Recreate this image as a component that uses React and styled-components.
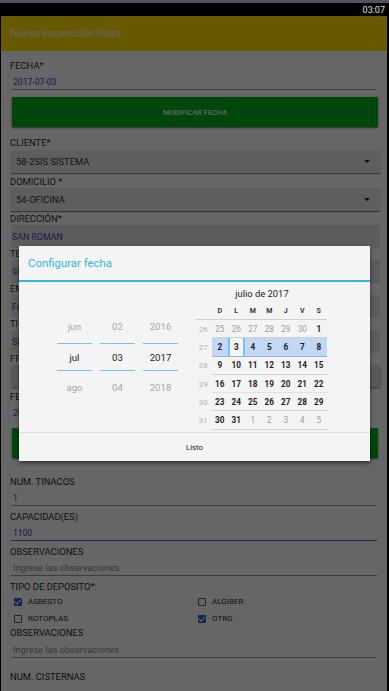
import React from "react";
import styled, { createGlobalStyle } from "styled-components";

const GlobalStyle = createGlobalStyle`
  html, body {
    margin: 0;
    padding: 0;
    background: #000;
  }
  body {
    font-family: Roboto, "Noto Sans", Arial, sans-serif;
    -webkit-font-smoothing: antialiased;
  }
`;

const weekDays = ["D", "L", "M", "M", "J", "V", "S"];

const weeks = [
  { num: 26, days: [[25, false], [26, false], [27, false], [28, false], [29, false], [30, false], [1, true]] },
  { num: 27, days: [[2, true], [3, true], [4, true], [5, true], [6, true], [7, true], [8, true]], current: true },
  { num: 28, days: [[9, true], [10, true], [11, true], [12, true], [13, true], [14, true], [15, true]] },
  { num: 29, days: [[16, true], [17, true], [18, true], [19, true], [20, true], [21, true], [22, true]], light: true },
  { num: 30, days: [[23, true], [24, true], [25, true], [26, true], [27, true], [28, true], [29, true]] },
  { num: 31, days: [[30, true], [31, true], [1, false], [2, false], [3, false], [4, false], [5, false]] },
];

const App = () => {
  return (
    <>
      <GlobalStyle />
      <Screen>
        <TopStrip />
        <StatusBar>03:07</StatusBar>
        <Window>
          <AppBar>Nueva Inspección Plata</AppBar>
          <Form>
            <Label top={9}>FECHA*</Label>
            <LineValue top={3}>2017-07-03</LineValue>
            <GreenButton top={7}>MODIFICAR FECHA</GreenButton>

            <Label top={10}>CLIENTE*</Label>
            <Select top={1}>
              <span>58-2SIS SISTEMA</span>
              <Caret />
            </Select>
            <Label top={3}>DOMICILIO *</Label>
            <Select>
              <span>54-OFICINA</span>
              <Caret />
            </Select>

            <Label top={2}>DIRECCIÓN*</Label>
            <FieldBox>SAN ROMAN</FieldBox>
            <Label>TEL</Label>
            <FieldBox>98</FieldBox>
            <Label>EM</Label>
            <FieldBox>Fra</FieldBox>
            <Label>TI</Label>
            <FieldBox>SE</FieldBox>
            <Label>FR</Label>
            <GreyButton />
            <Label top={4}>FE</Label>
            <PlainValue>20</PlainValue>
            <GreenButton top={7} />

            <Label top={18}>NUM. TINACOS</Label>
            <LineValue top={3}>1</LineValue>
            <Label top={5}>CAPACIDAD(ES)</Label>
            <LineValue top={3} focused>1100</LineValue>
            <Label top={5}>OBSERVACIONES</Label>
            <LineValue top={3} hint>Ingrese las observaciones</LineValue>
            <Label top={5}>TIPO DE DEPOSITO*:</Label>
            <CheckGrid>
              <CheckItem>
                <Box checked>
                  <CheckMark />
                </Box>
                ASBESTO
              </CheckItem>
              <CheckItem>
                <Box />
                ALGIBER
              </CheckItem>
              <CheckItem>
                <Box />
                ROTOPLAS
              </CheckItem>
              <CheckItem>
                <Box checked>
                  <CheckMark />
                </Box>
                OTRO
              </CheckItem>
            </CheckGrid>
            <Label>OBSERVACIONES</Label>
            <LineValue top={4} hint>Ingrese las observaciones</LineValue>
            <Label top={13}>NUM. CISTERNAS</Label>
          </Form>
          <Scrim />
          <Dialog>
            <DialogTitle>Configurar fecha</DialogTitle>
            <DialogBody>
              <Spinners>
                <SpinnerColumn>
                  <SpinItem>jun</SpinItem>
                  <SpinItem selected>jul</SpinItem>
                  <SpinItem>ago</SpinItem>
                </SpinnerColumn>
                <SpinnerColumn>
                  <SpinItem>02</SpinItem>
                  <SpinItem selected>03</SpinItem>
                  <SpinItem>04</SpinItem>
                </SpinnerColumn>
                <SpinnerColumn>
                  <SpinItem>2016</SpinItem>
                  <SpinItem selected>2017</SpinItem>
                  <SpinItem>2018</SpinItem>
                </SpinnerColumn>
              </Spinners>
              <Calendar>
                <MonthTitle>julio de 2017</MonthTitle>
                <HeaderRow>
                  <Cell />
                  {weekDays.map((d, i) => (
                    <DayName key={i}>{d}</DayName>
                  ))}
                </HeaderRow>
                {weeks.map((w) => (
                  <WeekRow key={w.num}>
                    <WeekNum>{w.num}</WeekNum>
                    <WeekDays current={w.current} light={w.light}>
                      {w.days.map(([n, inMonth], i) => (
                        <Day
                          key={i}
                          inMonth={inMonth}
                          selected={w.current && n === 3}
                        >
                          {n}
                        </Day>
                      ))}
                    </WeekDays>
                  </WeekRow>
                ))}
              </Calendar>
            </DialogBody>
            <DialogFooter>Listo</DialogFooter>
          </Dialog>
        </Window>
      </Screen>
    </>
  );
};

// ================= Styled Components =================
const Screen = styled.div`
  width: 389px;
  height: 691px;
  overflow: hidden;
  display: flex;
  flex-direction: column;
  background: #000;
`;

const TopStrip = styled.div`
  height: 3px;
  background: #54505e;
`;

const StatusBar = styled.div`
  height: 13px;
  display: flex;
  align-items: center;
  justify-content: flex-end;
  padding-right: 4px;
  color: #e0e0e0;
  font-size: 9px;
  background: #000;
`;

const Window = styled.div`
  position: relative;
  flex: 1;
  margin-left: 1px;
  margin-right: 2px;
  background: #ffffff;
  display: flex;
  flex-direction: column;
`;

const AppBar = styled.div`
  height: 35px;
  flex-shrink: 0;
  display: flex;
  align-items: center;
  padding-left: 9px;
  background: #ffdf00;
  color: #ffffff;
  font-size: 10.6px;
`;

const Form = styled.div`
  display: flex;
  flex-direction: column;
  padding: 0 9px 0 9px;
`;

const Label = styled.div`
  margin-top: ${(p) => p.top || 0}px;
  height: 12px;
  line-height: 12px;
  font-size: 9.4px;
  color: #2b2b2b;
  white-space: nowrap;
`;

const LineValue = styled.div`
  margin-top: ${(p) => p.top || 2}px;
  margin-left: 1px;
  margin-right: 1px;
  height: 14px;
  line-height: 14px;
  padding-left: 2px;
  font-size: ${(p) => (p.hint ? "9.2px" : "8.6px")};
  color: ${(p) => (p.hint ? "#8a8a8a" : "#4742c0")};
  border-bottom: ${(p) => (p.focused ? "1.5px solid #3d73cc" : "1px solid #9a9a9a")};
`;

const PlainValue = styled.div`
  margin-top: 2px;
  height: 16px;
  line-height: 16px;
  padding-left: 3px;
  font-size: 8.6px;
  color: #4742c0;
`;

const GreenButton = styled.div`
  margin-top: ${(p) => p.top || 0}px;
  margin-left: 2px;
  height: 30px;
  flex-shrink: 0;
  display: flex;
  align-items: center;
  justify-content: center;
  background: #00b21f;
  color: #f4f4f4;
  font-size: 7.4px;
  font-weight: 500;
  border-radius: 1px;
  box-shadow: 0 1px 2px rgba(0, 0, 0, 0.6);
`;

const Select = styled.div`
  margin-top: ${(p) => p.top || 0}px;
  margin-left: 1px;
  margin-right: -2px;
  height: 23px;
  flex-shrink: 0;
  display: flex;
  align-items: center;
  justify-content: space-between;
  padding: 0 10px 0 5px;
  background: #ececec;
  color: #333;
  font-size: 9.4px;
  box-shadow: 0 1px 1px rgba(0, 0, 0, 0.45);
`;

const Caret = styled.span`
  width: 0;
  height: 0;
  border-left: 3px solid transparent;
  border-right: 3px solid transparent;
  border-top: 3px solid #222;
`;

const FieldBox = styled.div`
  margin-left: 1px;
  margin-right: -2px;
  height: 23px;
  flex-shrink: 0;
  display: flex;
  align-items: center;
  padding-left: 1px;
  background: #e6e6e6;
  color: #4742c0;
  font-size: 8.8px;
`;

const GreyButton = styled.div`
  margin-left: 2px;
  margin-right: -2px;
  height: 22px;
  flex-shrink: 0;
  background: #e2e2e2;
  box-shadow: 0 1px 2px rgba(0, 0, 0, 0.5);
`;

const CheckGrid = styled.div`
  display: grid;
  grid-template-columns: 184px 1fr;
  grid-auto-rows: 17px;
  padding-left: 4px;
`;

const CheckItem = styled.div`
  display: flex;
  align-items: center;
  gap: 6px;
  font-size: 8px;
  color: #2b2b2b;
`;

const Box = styled.div`
  width: 8px;
  height: 8px;
  border-radius: 1px;
  box-sizing: border-box;
  display: flex;
  align-items: center;
  justify-content: center;
  background: ${(p) => (p.checked ? "#3062d4" : "transparent")};
  border: ${(p) => (p.checked ? "none" : "1.2px solid #555")};
`;

const CheckMark = styled.span`
  width: 2.5px;
  height: 4.5px;
  margin-top: -1px;
  border-right: 1px solid #fff;
  border-bottom: 1px solid #fff;
  transform: rotate(40deg);
`;

const Scrim = styled.div`
  position: absolute;
  inset: 0;
  background: rgba(0, 0, 0, 0.6);
`;

const Dialog = styled.div`
  position: absolute;
  left: 18px;
  top: 230px;
  width: 351px;
  height: 215px;
  display: flex;
  flex-direction: column;
  background: #f4f4f4;
  box-shadow: 0 2px 4px rgba(0, 0, 0, 0.55);
`;

const DialogTitle = styled.div`
  height: 36px;
  flex-shrink: 0;
  display: flex;
  align-items: center;
  padding: 0 0 0 9px;
  box-sizing: border-box;
  color: #33b5e5;
  font-size: 11.4px;
  border-bottom: 2px solid #33b5e5;
`;

const DialogBody = styled.div`
  flex: 1;
  display: flex;
  align-items: stretch;
  border-bottom: 1px solid #dedede;
`;

const Spinners = styled.div`
  width: 176px;
  display: flex;
  align-items: center;
  gap: 8px;
  padding-left: 38px;
  box-sizing: border-box;
`;

const SpinnerColumn = styled.div`
  width: 35px;
  display: flex;
  flex-direction: column;
`;

const SpinItem = styled.div`
  height: ${(p) => (p.selected ? "28px" : "33px")};
  display: flex;
  align-items: center;
  justify-content: center;
  box-sizing: border-box;
  font-size: 9.6px;
  color: ${(p) => (p.selected ? "#222" : "#a6a6a6")};
  border-top: ${(p) => (p.selected ? "1.5px solid #6ec8ec" : "none")};
  border-bottom: ${(p) => (p.selected ? "1.5px solid #6ec8ec" : "none")};
`;

const Calendar = styled.div`
  display: flex;
  flex-direction: column;
  padding-top: 4px;
`;

const MonthTitle = styled.div`
  height: 16px;
  line-height: 16px;
  text-align: center;
  font-size: 9.4px;
  color: #222;
  padding-left: 2px;
`;

const HeaderRow = styled.div`
  display: grid;
  grid-template-columns: repeat(8, 16.5px);
  height: 17px;
  align-items: center;
  border-bottom: 1px solid #d0d0d0;
`;

const Cell = styled.div``;

const DayName = styled.div`
  text-align: center;
  font-size: 7px;
  font-weight: 700;
  color: #333;
`;

const WeekRow = styled.div`
  display: flex;
  height: 18.3px;
`;

const WeekNum = styled.div`
  width: 16.5px;
  display: flex;
  align-items: center;
  justify-content: center;
  font-size: 7.8px;
  color: #b0b0b0;
`;

const WeekDays = styled.div`
  display: grid;
  grid-template-columns: repeat(7, 16.5px);
  box-sizing: border-box;
  background: ${(p) => (p.current ? "#c3d8f6" : "transparent")};
  border-bottom: 1px solid
    ${(p) => (p.current ? "#9fb2cc" : p.light ? "#e2e2e2" : "#cfcfd4")};
`;

const Day = styled.div`
  display: flex;
  align-items: center;
  justify-content: center;
  font-size: 8.2px;
  font-weight: ${(p) => (p.inMonth ? 700 : 400)};
  color: ${(p) => (p.inMonth ? "#1e1e1e" : "#a0a0a0")};
  background: ${(p) => (p.selected ? "#f4f4f4" : "transparent")};
  box-sizing: border-box;
  border-left: ${(p) => (p.selected ? "2px solid #6ec8ec" : "none")};
  border-right: ${(p) => (p.selected ? "2px solid #6ec8ec" : "none")};
`;

const DialogFooter = styled.div`
  height: 28px;
  flex-shrink: 0;
  display: flex;
  align-items: center;
  justify-content: center;
  font-size: 7.8px;
  color: #222;
`;

export default App;
